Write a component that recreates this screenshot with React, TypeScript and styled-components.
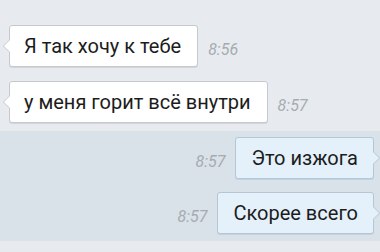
import React from 'react';
import styled, { createGlobalStyle, css } from 'styled-components';

const GlobalStyle = createGlobalStyle`
  html, body {
    margin: 0;
    padding: 0;
    background: #e7ebef;
    font-family: Roboto, "Noto Sans", sans-serif;
  }
`;

const Chat = styled.div`
  width: 380px;
  height: 252px;
  padding-top: 25px;
  box-sizing: border-box;
  overflow: hidden;
  display: flex;
  flex-direction: column;
`;

const Row = styled.div<{ $out?: boolean }>`
  display: flex;
  align-items: center;
  gap: 10px;
  justify-content: ${(p) => (p.$out ? 'flex-end' : 'flex-start')};
  padding: ${(p) => (p.$out ? '0 6px 0 0' : '0 0 0 9px')};
  margin-bottom: 14px;
`;

const Unread = styled.div`
  background: #d9e1e9;
  margin-top: -6px;
  padding: 6px 0 7px;

  ${Row} {
    margin-bottom: 13px;
  }
  ${Row}:last-child {
    margin-bottom: 0;
  }
`;

const Bubble = styled.div<{ $out?: boolean }>`
  position: relative;
  box-sizing: border-box;
  height: 42px;
  padding: 0 16px 0 14px;
  display: flex;
  align-items: center;
  font-size: 20px;
  color: #1c1c1c;
  border-radius: 3px;
  white-space: nowrap;
  background: ${(p) => (p.$out ? '#e4f1fb' : '#ffffff')};
  border: 1px solid ${(p) => (p.$out ? '#b5c6d6' : '#c6cacf')};
  box-shadow: 0 1px 0 ${(p) => (p.$out ? '#c4d2df' : '#d2d6da')};

  &::before,
  &::after {
    content: '';
    position: absolute;
    top: 50%;
    transform: translateY(-50%);
    border: 7px solid transparent;
  }

  ${(p) =>
    p.$out
      ? css`
          padding: 0 15px;
          &::before {
            right: -7px;
            border-right: 0;
            border-left-color: #b5c6d6;
          }
          &::after {
            right: -6px;
            border-right: 0;
            border-left-color: #e4f1fb;
          }
        `
      : css`
          &::before {
            left: -7px;
            border-left: 0;
            border-right-color: #c6cacf;
          }
          &::after {
            left: -6px;
            border-left: 0;
            border-right-color: #ffffff;
          }
        `}
`;

const Time = styled.span`
  font-size: 16px;
  font-style: italic;
  color: #a6abb0;
  padding-top: 6px;
`;

const App = () => (
  <>
    <GlobalStyle />
    <Chat>
      <Row>
        <Bubble>Я так хочу к тебе</Bubble>
        <Time>8:56</Time>
      </Row>
      <Row>
        <Bubble>у меня горит всё внутри</Bubble>
        <Time>8:57</Time>
      </Row>
      <Unread>
        <Row $out>
          <Time>8:57</Time>
          <Bubble $out>Это изжога</Bubble>
        </Row>
        <Row $out>
          <Time>8:57</Time>
          <Bubble $out>Скорее всего</Bubble>
        </Row>
      </Unread>
    </Chat>
  </>
);

export default App;
